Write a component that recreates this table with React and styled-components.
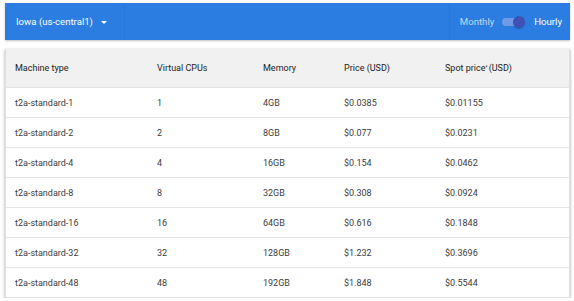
import React from "react";
import styled, { createGlobalStyle } from "styled-components";

const Global = createGlobalStyle`
  html, body { margin: 0; padding: 0; background: #fff; }
  body { font-family: Roboto, "Liberation Sans", Arial, sans-serif; }
`;

const Page = styled.div`
  padding: 3px 4px 0 5px;
  display: flex;
  flex-direction: column;
  gap: 9px;
`;

const Bar = styled.div`
  height: 37px;
  background: #2b7de1;
  box-shadow: 0 1px 2px rgba(0,0,0,0.25);
  display: flex;
  align-items: center;
  color: #fff;
`;

const Region = styled.div`
  display: flex;
  align-items: center;
  gap: 8px;
  padding: 0 17px 0 11px;
  height: 100%;
  font-size: 9.6px;
  border-right: 1px solid rgba(0,0,0,0.05);
`;

const Caret = styled.span`
  width: 0;
  height: 0;
  border-left: 3px solid transparent;
  border-right: 3px solid transparent;
  border-top: 3px solid #fff;
  margin-top: 1px;
`;

const Spacer = styled.div`
  flex: 1;
`;

const Periods = styled.div`
  display: flex;
  align-items: center;
  height: 100%;
  padding: 0 8px 0 10px;
  gap: 8px;
  font-size: 9.6px;
  border-left: 1px solid rgba(0,0,0,0.05);
`;

const Period = styled.span`
  color: ${p => (p.$active ? "#fff" : "rgba(255,255,255,0.72)")};
`;

const Track = styled.span`
  position: relative;
  width: 20px;
  height: 8px;
  border-radius: 4px;
  background: #6f9ae6;
  margin-right: 4px;
`;

const Knob = styled.span`
  position: absolute;
  right: -3px;
  top: -2px;
  width: 12px;
  height: 12px;
  border-radius: 50%;
  background: #3f51b5;
  box-shadow: 0 1px 1px rgba(0,0,0,0.2);
`;

const Card = styled.div`
  background: #fff;
  box-shadow: 0 1px 3px rgba(0,0,0,0.35);
  border: 1px solid #e0e0e0;
  border-top: none;
`;

const Table = styled.div`
  display: grid;
  grid-template-columns: 151px 106px 81px 101px 1fr;
  font-size: 9px;
`;

const Head = styled.div`
  height: 38px;
  background: #f1f1f1;
  color: #222;
  display: flex;
  align-items: center;
  padding-left: ${p => (p.$first ? "9px" : "0")};
`;

const Cell = styled.div`
  height: 29px;
  border-top: 1px solid #e4e4e4;
  color: #3c3c3c;
  display: flex;
  align-items: center;
  padding-left: ${p => (p.$first ? "9px" : "0")};
`;

const Sup = styled.sup`
  font-size: 5px;
  vertical-align: top;
  margin-right: 1px;
  position: relative;
  top: -1px;
`;

const rows = [
  ["t2a-standard-1", "1", "4GB", "$0.0385", "$0.01155"],
  ["t2a-standard-2", "2", "8GB", "$0.077", "$0.0231"],
  ["t2a-standard-4", "4", "16GB", "$0.154", "$0.0462"],
  ["t2a-standard-8", "8", "32GB", "$0.308", "$0.0924"],
  ["t2a-standard-16", "16", "64GB", "$0.616", "$0.1848"],
  ["t2a-standard-32", "32", "128GB", "$1.232", "$0.3696"],
  ["t2a-standard-48", "48", "192GB", "$1.848", "$0.5544"],
];

export default function App() {
  return (
    <>
      <Global />
      <Page>
        <Bar>
          <Region>
            <span>Iowa (us-central1)</span>
            <Caret />
          </Region>
          <Spacer />
          <Periods>
            <Period>Monthly</Period>
            <Track>
              <Knob />
            </Track>
            <Period $active>Hourly</Period>
          </Periods>
        </Bar>
        <Card>
          <Table>
            <Head $first>Machine type</Head>
            <Head>Virtual CPUs</Head>
            <Head>Memory</Head>
            <Head>Price (USD)</Head>
            <Head>
              Spot price<Sup>*</Sup> (USD)
            </Head>
            {rows.map((r, i) =>
              r.map((c, j) => (
                <Cell key={i + "-" + j} $first={j === 0}>
                  {c}
                </Cell>
              ))
            )}
          </Table>
        </Card>
      </Page>
    </>
  );
}
